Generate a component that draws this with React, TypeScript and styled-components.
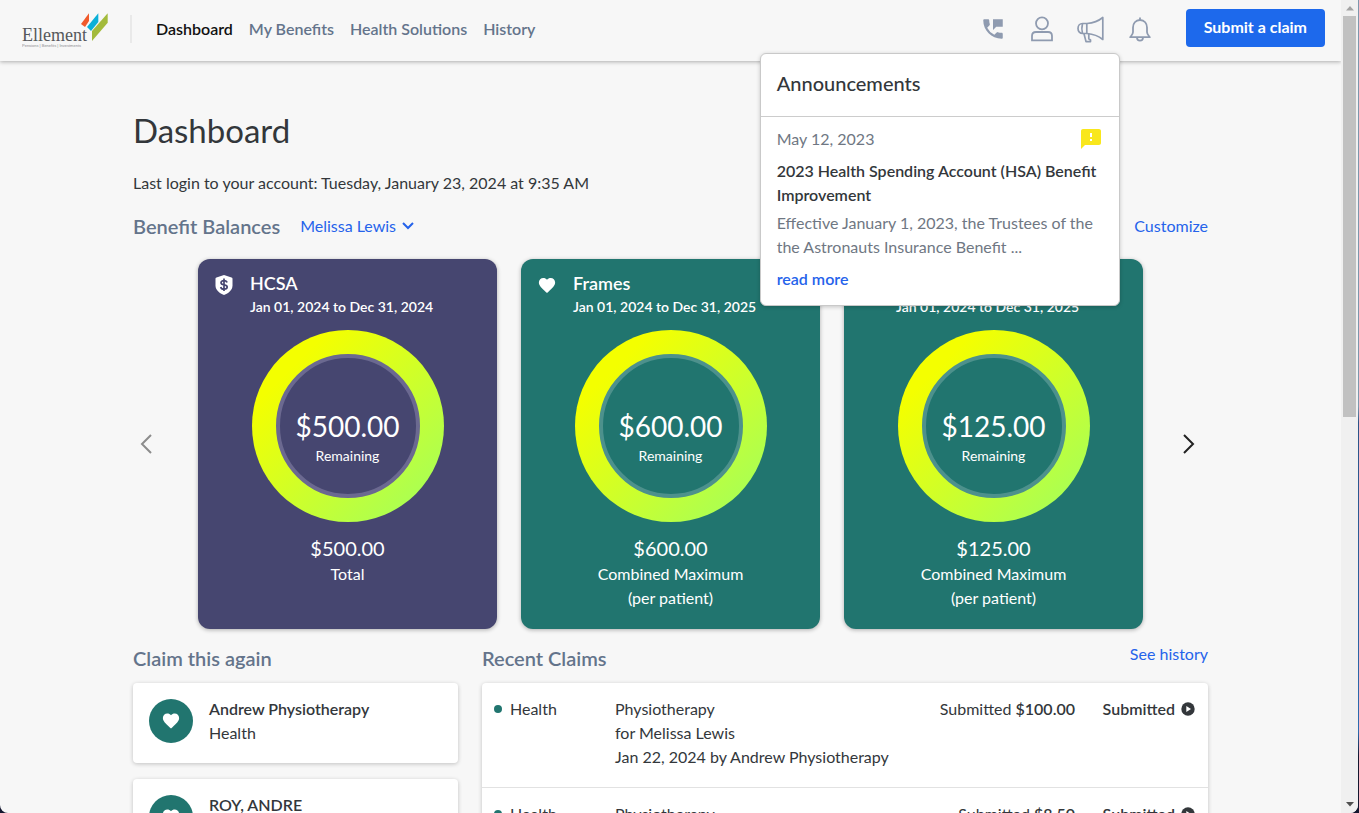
import React from "react";
import styled, { createGlobalStyle } from "styled-components";
import { MdPermPhoneMsg, MdFeedback } from "react-icons/md";
import { IoMdHeart } from "react-icons/io";

const GlobalStyle = createGlobalStyle`
  *, *::before, *::after { box-sizing: border-box; }
  body {
    margin: 0;
    overflow: hidden;
    font-family: Lato, "Liberation Sans", sans-serif;
    font-size: 16px;
    line-height: 24px;
    color: #33373b;
  }
  h1, h2, h3, p { margin: 0; }
  a { text-decoration: none; }
  button, select { font: inherit; border: 0; background: none; cursor: pointer; }
`;

const Desktop = styled.div`
  height: 100vh;
  padding-right: 1px;
  background: linear-gradient(#7d97ad 0 50%, #2c5488 52%, #2c6bb0 90%, #14172f 93%);
`;

const Window = styled.div`
  display: flex;
  height: 100%;
  overflow: hidden;
  background: #f7f7f7;
  border-radius: 0 0 8px 8px;
`;

const Page = styled.div`
  flex: 1;
  min-width: 0;
  overflow: hidden;
`;

const ScrollTrack = styled.div`
  display: flex;
  flex-direction: column;
  align-items: center;
  justify-content: space-between;
  width: 17px;
  padding: 6px 2px;
  background: #f0f0f0;
`;

const ScrollThumb = styled.div`
  width: 13px;
  height: 50%;
  margin: 5px 0 auto;
  background: #c1c1c1;
`;

const Header = styled.header`
  position: relative;
  z-index: 2;
  display: flex;
  align-items: center;
  height: 61px;
  padding: 0 16px 6px 22px;
  background: #f7f7f7;
  box-shadow: 0 1px 4px rgba(0, 0, 0, 0.3);
`;

const LogoLink = styled.a`
  display: flex;
  padding-top: 4px;
`;

const Nav = styled.nav`
  display: flex;
  align-items: center;
  gap: 16px;
  height: 28px;
  margin: 3px auto 0 22px;
  padding-left: 24px;
  border-left: 2px solid #e9e9e9;
`;

const NavLink = styled.a<{ $active?: boolean }>`
  font-weight: 600;
  color: ${(p) => (p.$active ? "#111111" : "#64748b")};
`;

const Tools = styled.div`
  display: flex;
  align-items: center;
  gap: 19px;
  margin-right: 31px;
  padding-top: 3px;
`;

const ToolSlot = styled.div`
  position: relative;
`;

const IconButton = styled.button`
  display: flex;
  align-items: center;
  justify-content: center;
  width: 30px;
  height: 30px;
  padding: 0;
  color: #8f9bb0;
`;

const PrimaryButton = styled.button`
  height: 38px;
  padding: 0 18px 2px;
  border-radius: 4px;
  background: #1d69ec;
  color: #ffffff;
  font-size: 16px;
  font-weight: 700;
`;

const Popover = styled.section`
  position: absolute;
  top: 39px;
  right: -14px;
  width: 360px;
  background: #ffffff;
  border: 1px solid #c9c9c9;
  border-radius: 6px;
  box-shadow: 0 1px 4px rgba(0, 0, 0, 0.2);
`;

const PopoverTitle = styled.h2`
  padding: 13px 16px 17px;
  border-bottom: 1px solid #cccccc;
  font-size: 20px;
  line-height: 32px;
  font-weight: 500;
`;

const Announcement = styled.article`
  padding: 10px 16px 14px;
`;

const AnnouncementMeta = styled.div`
  display: flex;
  align-items: center;
  justify-content: space-between;
  margin-bottom: 8px;
  color: #6f7783;
`;

const AnnouncementTitle = styled.h3`
  font-size: 16px;
  font-weight: 600;
`;

const AnnouncementText = styled.p`
  margin: 4px 0 8px;
  color: #6f7783;
`;

const TextLink = styled.a<{ $strong?: boolean }>`
  color: #2563eb;
  font-weight: ${(p) => (p.$strong ? 600 : 400)};
`;

const Main = styled.main`
  max-width: 1075px;
  margin: 0 auto;
  padding-top: 45px;
`;

const PageTitle = styled.h1`
  font-size: 33px;
  line-height: 48px;
  font-weight: 400;
`;

const LastLogin = styled.p`
  margin: 17px 0 15px;
`;

const SectionBar = styled.div`
  display: flex;
  align-items: center;
  height: 32px;
  gap: 20px;
`;

const SectionTitle = styled.h2`
  font-size: 20px;
  line-height: 32px;
  font-weight: 600;
  color: #64748b;
`;

const MemberPicker = styled.label`
  display: flex;
  align-items: center;
  gap: 6px;
  margin-right: auto;
  color: #2563eb;
`;

const MemberSelect = styled.select`
  appearance: none;
  padding: 0;
  color: inherit;
  line-height: 24px;
`;

const Carousel = styled.section`
  display: grid;
  grid-template-columns: 65px 1fr 65px;
  align-items: center;
  margin: 17px 0 13px;
`;

const ArrowButton = styled.button<{ $end?: boolean }>`
  display: flex;
  justify-content: ${(p) => (p.$end ? "flex-end" : "flex-start")};
  padding: 0 ${(p) => (p.$end ? 13 : 7)}px;
  color: ${(p) => (p.$end ? "#222222" : "#8c8c8c")};
`;

const Cards = styled.div`
  display: grid;
  grid-template-columns: repeat(3, 1fr);
  gap: 24px;
`;

const Card = styled.article<{ $color: string }>`
  min-height: 370px;
  padding: 12px 16px 16px;
  border-radius: 12px;
  background: ${(p) => p.$color};
  color: #ffffff;
  text-align: center;
  box-shadow: 0 1px 4px rgba(0, 0, 0, 0.3);
`;

const CardHead = styled.div`
  display: grid;
  grid-template-columns: 20px 1fr;
  column-gap: 16px;
  text-align: left;
`;

const CardIcon = styled.span`
  display: flex;
  align-items: center;
  justify-content: center;
  height: 28px;
`;

const CardTitle = styled.h3`
  min-height: 24px;
  font-size: 18px;
  line-height: 24px;
  font-weight: 600;
`;

const CardPeriod = styled.p`
  font-size: 14px;
  font-weight: 600;
`;

const Ring = styled.div`
  width: 192px;
  height: 192px;
  margin: 11px auto 12px;
  padding: 24px;
  border-radius: 50%;
  background: linear-gradient(135deg, #f4ff00 20%, #a8ff55 90%);
`;

const RingCore = styled.div<{ $color: string; $rim: string }>`
  display: flex;
  flex-direction: column;
  align-items: center;
  justify-content: center;
  height: 100%;
  padding-top: 24px;
  border: 4px solid ${(p) => p.$rim};
  border-radius: 50%;
  background: ${(p) => p.$color};
`;

const RingAmount = styled.strong`
  font-size: 28px;
  line-height: 36px;
  font-weight: 400;
`;

const RingLabel = styled.span`
  font-size: 14px;
  line-height: 24px;
`;

const TotalAmount = styled.p`
  font-size: 20px;
  line-height: 28px;
`;

const Columns = styled.div`
  display: grid;
  grid-template-columns: 325px 1fr;
  gap: 24px;
`;

const ColumnBar = styled(SectionBar)`
  justify-content: space-between;
  align-items: flex-start;
  margin-bottom: 9px;
`;

const ClaimList = styled.ul`
  display: grid;
  gap: 16px;
  margin: 0;
  padding: 0;
  list-style: none;
`;

const ClaimCard = styled.li`
  display: flex;
  align-items: flex-end;
  gap: 16px;
  height: 80px;
  padding: 16px;
  padding-bottom: 20px;
  border-radius: 4px;
  background: #ffffff;
  box-shadow: 0 1px 4px rgba(0, 0, 0, 0.22);
`;

const Avatar = styled.span`
  display: flex;
  align-items: center;
  justify-content: center;
  width: 44px;
  height: 44px;
  border-radius: 50%;
  background: #21756f;
  color: #ffffff;
`;

const ClaimText = styled.div`
  align-self: flex-start;
  margin-top: -2px;
`;

const ClaimName = styled.h3`
  font-size: 16px;
  font-weight: 600;
`;

const ClaimTable = styled.table`
  width: 100%;
  border-collapse: collapse;
  background: #ffffff;
  border-radius: 4px;
  box-shadow: 0 1px 4px rgba(0, 0, 0, 0.22);
`;

const ClaimRow = styled.tr`
  vertical-align: top;
  & + & { border-top: 1px solid #e2e2e2; }
`;

const Cell = styled.td<{ $width?: number; $end?: boolean }>`
  width: ${(p) => (p.$width ? `${p.$width}px` : "auto")};
  padding: 14px 0 18px;
  text-align: ${(p) => (p.$end ? "right" : "left")};
`;

const Kind = styled.span`
  display: flex;
  align-items: center;
  gap: 8px;
  padding-left: 12px;
  &::before {
    content: "";
    width: 8px;
    height: 8px;
    border-radius: 50%;
    background: #21756f;
  }
`;

const Bold = styled.strong`
  font-weight: 600;
`;

const Status = styled.span`
  display: flex;
  align-items: center;
  justify-content: flex-end;
  gap: 6px;
  padding-right: 13px;
  font-weight: 600;
`;

const Logo = () => (
  <svg width="86" height="36" viewBox="22 12 86 36" role="img" aria-label="Ellement">
    <path d="M81 24 89 13.3V21L85 27Z" fill="#f05a2b" />
    <path d="M87 27 98.3 13.3V22L91 31Z" fill="#0bb0d8" />
    <path d="M92 31 107.7 13.3V22.7L92 41Z" fill="#a3bb3c" />
    <text x="22" y="41" fontFamily="Liberation Serif, serif" fontSize="18" fill="#55575b">Ellement</text>
    <text x="22" y="47" fontFamily="Liberation Sans, sans-serif" fontSize="4" fill="#8b8d90">Pensions | Benefits | Investments</text>
  </svg>
);

const PersonIcon = () => (
  <svg width="22" height="26" viewBox="0 0 22 26" fill="none" stroke="currentColor" strokeWidth="1.8">
    <circle cx="11" cy="7.3" r="6" />
    <path d="M1 24.3V20c0-2.6 1.6-4 4-4h12c2.400 0 4 1.400 4 4v4.300Z" />
  </svg>
);

const MegaphoneIcon = () => (
  <svg width="27" height="27" viewBox="0 0 27 27" fill="none" stroke="currentColor" strokeWidth="1.7" strokeLinejoin="round">
    <path d="M5.500 7.500H10C16 7 21.500 5 25.800 1.500V23.500C21.500 20 16 18 10 17.500H5.500C3 17.500 1 15.500 1 12.500S3 7.500 5.500 7.500Z" />
    <path d="M9.800 7.500V17.500M5.500 7.500C4.700 10.500 4.700 14.500 5.500 17.500M7 17.700 9 25.600H13.500V24L11.800 22.800V17.800" />
  </svg>
);

const BellIcon = () => (
  <svg width="22" height="25" viewBox="0 0 22 25" fill="none" stroke="currentColor" strokeWidth="1.800">
    <path d="M11 0.500V3M11 3C6.500 3 4 6.500 4 10.500V15C4 17.200 2.500 18.500 1.200 20.200H20.800C19.500 18.500 18 17.200 18 15V10.500C18 6.500 15.500 3 11 3Z" strokeLinejoin="round" />
    <path d="M8 20.500C8 22.500 9.300 23.600 11 23.600S14 22.500 14 20.500" />
  </svg>
);

const ShieldDollarIcon = () => (
  <svg width="18" height="20" viewBox="0 0 18 20">
    <path d="M9 0 16.500 2.500C17.300 2.800 17.500 3.300 17.500 3.800V10.500C17.500 15 13.500 18.300 9 20 4.500 18.300 0.500 15 0.500 10.500V3.800C0.500 3.300 0.700 2.800 1.500 2.500Z" fill="currentColor" />
    <path d="M12 7.500C11.700 6.200 10.500 5.600 9 5.600 7.300 5.600 6 6.400 6 7.800 6 11 12.200 8.800 12.200 12 12.200 13.400 10.800 14.200 9 14.200 7.200 14.200 6 13.400 5.700 12M9 3.600V16" fill="none" stroke="#464670" strokeWidth="1.700" />
  </svg>
);

const Chevron = ({ d, width, height }: { d: string; width: number; height: number }) => (
  <svg width={width} height={height} viewBox={`0 0 ${width} ${height}`} fill="none" stroke="currentColor" strokeWidth="2">
    <path d={d} />
  </svg>
);

const PlayIcon = () => (
  <svg width="14" height="14" viewBox="0 0 14 14">
    <circle cx="7" cy="7" r="6.700" fill="#33373b" />
    <path d="M5.300 4V10L10 7Z" fill="#ffffff" />
  </svg>
);

const ScrollArrow = ({ up }: { up?: boolean }) => (
  <svg width="8" height="5" viewBox="0 0 8 5">
    <path d={up ? "M4 0 8 4.500H0Z" : "M0 0H8L4 4.500Z"} fill={up ? "#a3a3a3" : "#505050"} />
  </svg>
);

type Balance = {
  title: string;
  period: string;
  amount: string;
  caption: string[];
  color: string;
  rim: string;
  icon: React.ReactNode;
};

const balances: Balance[] = [
  { title: "HCSA", period: "Jan 01, 2024 to Dec 31, 2024", amount: "$500.00", caption: ["Total"], color: "#464670", rim: "#6b6990", icon: <ShieldDollarIcon /> },
  { title: "Frames", period: "Jan 01, 2024 to Dec 31, 2025", amount: "$600.00", caption: ["Combined Maximum", "(per patient)"], color: "#21756f", rim: "#4d918c", icon: <IoMdHeart size={21} /> },
  { title: "", period: "Jan 01, 2024 to Dec 31, 2025", amount: "$125.00", caption: ["Combined Maximum", "(per patient)"], color: "#21756f", rim: "#4d918c", icon: null },
];

const repeatClaims = [
  { name: "Andrew Physiotherapy", kind: "Health" },
  { name: "ROY, ANDRE", kind: "" },
];

const recentClaims = [
  { kind: "Health", lines: ["Physiotherapy", "for Melissa Lewis", "Jan 22, 2024 by Andrew Physiotherapy"], amount: "$100.00" },
  { kind: "Health", lines: ["Physiotherapy"], amount: "$8.50" },
];

const BalanceCard = ({ item }: { item: Balance }) => (
  <Card $color={item.color}>
    <CardHead>
      <CardIcon>{item.icon}</CardIcon>
      <div>
        <CardTitle>{item.title}</CardTitle>
        <CardPeriod>{item.period}</CardPeriod>
      </div>
    </CardHead>
    <Ring>
      <RingCore $color={item.color} $rim={item.rim}>
        <RingAmount>{item.amount}</RingAmount>
        <RingLabel>Remaining</RingLabel>
      </RingCore>
    </Ring>
    <TotalAmount>{item.amount}</TotalAmount>
    {item.caption.map((line) => (
      <p key={line}>{line}</p>
    ))}
  </Card>
);

export default function App() {
  return (
    <Desktop>
      <GlobalStyle />
      <Window>
        <Page>
          <Header>
            <LogoLink href="#"><Logo /></LogoLink>
            <Nav>
              <NavLink href="#" $active>Dashboard</NavLink>
              <NavLink href="#">My Benefits</NavLink>
              <NavLink href="#">Health Solutions</NavLink>
              <NavLink href="#">History</NavLink>
            </Nav>
            <Tools>
              <IconButton aria-label="Contact"><MdPermPhoneMsg size={26} /></IconButton>
              <IconButton aria-label="Profile"><PersonIcon /></IconButton>
              <ToolSlot>
                <IconButton aria-label="Announcements"><MegaphoneIcon /></IconButton>
                <Popover>
                  <PopoverTitle>Announcements</PopoverTitle>
                  <Announcement>
                    <AnnouncementMeta>
                      May 12, 2023
                      <MdFeedback size={24} color="#f9e71c" />
                    </AnnouncementMeta>
                    <AnnouncementTitle>2023 Health Spending Account (HSA) Benefit Improvement</AnnouncementTitle>
                    <AnnouncementText>
                      Effective January 1, 2023, the Trustees of the<br />the Astronauts Insurance Benefit ...
                    </AnnouncementText>
                    <TextLink href="#" $strong>read more</TextLink>
                  </Announcement>
                </Popover>
              </ToolSlot>
              <IconButton aria-label="Notifications"><BellIcon /></IconButton>
            </Tools>
            <PrimaryButton>Submit a claim</PrimaryButton>
          </Header>

          <Main>
            <PageTitle>Dashboard</PageTitle>
            <LastLogin>Last login to your account: Tuesday, January 23, 2024 at 9:35 AM</LastLogin>
            <SectionBar>
              <SectionTitle>Benefit Balances</SectionTitle>
              <MemberPicker>
                <MemberSelect aria-label="Member" defaultValue="Melissa Lewis">
                  <option>Melissa Lewis</option>
                </MemberSelect>
                <Chevron width={12} height={8} d="M1 1 6 6 11 1" />
              </MemberPicker>
              <TextLink href="#">Customize</TextLink>
            </SectionBar>

            <Carousel>
              <ArrowButton aria-label="Previous"><Chevron width={12} height={20} d="M11 1 2 10 11 19" /></ArrowButton>
              <Cards>
                {balances.map((item, i) => (
                  <BalanceCard key={i} item={item} />
                ))}
              </Cards>
              <ArrowButton aria-label="Next" $end><Chevron width={12} height={20} d="M1 1 10 10 1 19" /></ArrowButton>
            </Carousel>

            <Columns>
              <section>
                <ColumnBar><SectionTitle>Claim this again</SectionTitle></ColumnBar>
                <ClaimList>
                  {repeatClaims.map((claim) => (
                    <ClaimCard key={claim.name}>
                      <Avatar><IoMdHeart size={20} /></Avatar>
                      <ClaimText>
                        <ClaimName>{claim.name}</ClaimName>
                        <p>{claim.kind}</p>
                      </ClaimText>
                    </ClaimCard>
                  ))}
                </ClaimList>
              </section>
              <section>
                <ColumnBar>
                  <SectionTitle>Recent Claims</SectionTitle>
                  <TextLink href="#">See history</TextLink>
                </ColumnBar>
                <ClaimTable>
                  <tbody>
                    {recentClaims.map((claim) => (
                      <ClaimRow key={claim.amount}>
                        <Cell $width={133}><Kind>{claim.kind}</Kind></Cell>
                        <Cell>
                          {claim.lines.map((line) => (
                            <p key={line}>{line}</p>
                          ))}
                        </Cell>
                        <Cell $end>Submitted <Bold>{claim.amount}</Bold></Cell>
                        <Cell $width={133} $end><Status>Submitted <PlayIcon /></Status></Cell>
                      </ClaimRow>
                    ))}
                  </tbody>
                </ClaimTable>
              </section>
            </Columns>
          </Main>
        </Page>
        <ScrollTrack aria-hidden="true">
          <ScrollArrow up />
          <ScrollThumb />
          <ScrollArrow />
        </ScrollTrack>
      </Window>
    </Desktop>
  );
}
